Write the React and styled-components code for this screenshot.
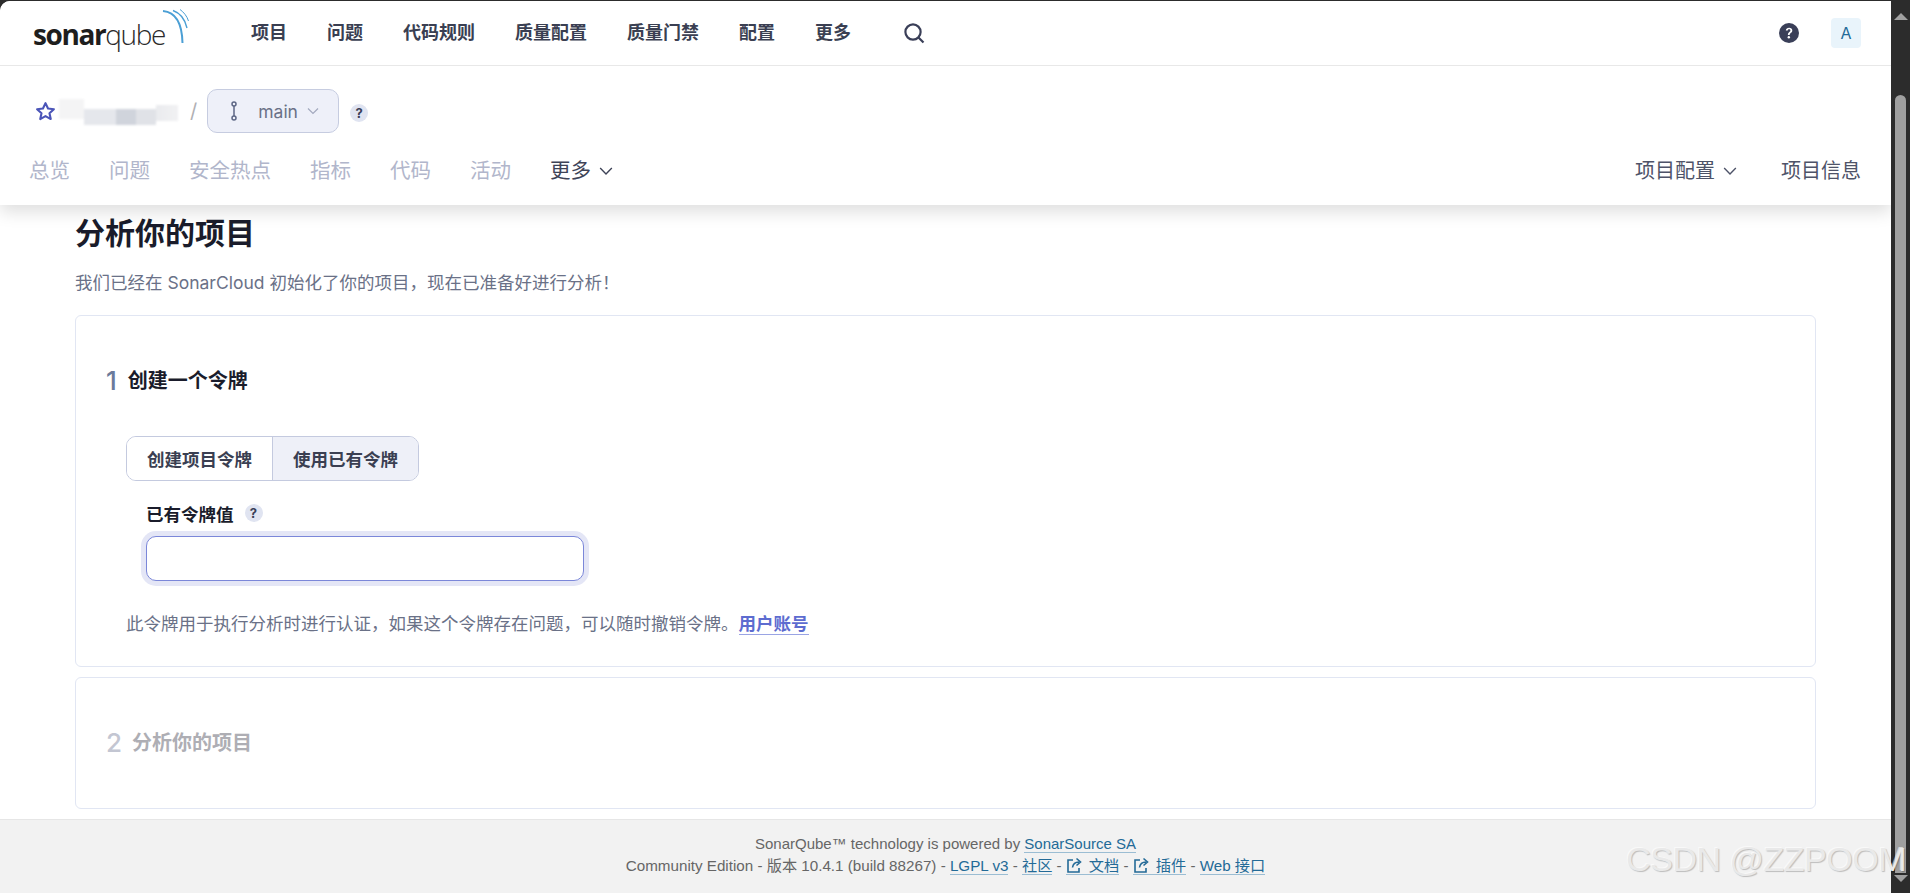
import React from 'react';
import styled, { createGlobalStyle } from 'styled-components';

const FONT = `Inter, "Noto Sans CJK SC", sans-serif`;

const GlobalStyle = createGlobalStyle`
  html, body {
    margin: 0;
    height: 100%;
    overflow: hidden;
    background: #2c2c2c;
  }
  body {
    font-family: ${FONT};
    color: #1a1c2b;
  }
`;

const Window = styled.div`
  position: relative;
  display: flex;
  height: 893px;
  background: #2c2c2c;
`;

const Page = styled.div`
  flex: 1;
  min-width: 0;
  margin-top: 1px;
  display: flex;
  flex-direction: column;
  background: #fff;
  border-top-left-radius: 10px;
  overflow: hidden;
`;

const Scrollbar = styled.div`
  width: 19px;
  padding-top: 13px;
  display: flex;
  flex-direction: column;
  align-items: center;
  border-top-right-radius: 8px;
`;

const ScrollArrow = styled.div`
  width: 0;
  height: 0;
  border-left: 7px solid transparent;
  border-right: 7px solid transparent;
  ${(p) => (p.$down ? 'border-top: 7px solid #a0a0a0; margin-top: 2px;' : 'border-bottom: 7px solid #a0a0a0;')}
`;

const ScrollThumb = styled.div`
  width: 11px;
  height: 778px;
  margin-top: 75px;
  background: #9f9f9f;
  border-radius: 6px 6px 0 0;
`;

const Header = styled.header`
  position: relative;
  z-index: 2;
  background: #fff;
  box-shadow: 0 7px 16px rgba(0, 0, 0, 0.13);
`;

const TopBar = styled.div`
  height: 65px;
  box-sizing: border-box;
  border-bottom: 1px solid #e8e8e8;
  display: flex;
  align-items: center;
  padding: 0 30px 0 33px;
`;

const Logo = styled.div`
  width: 218px;
  flex: none;
  display: flex;
  align-items: flex-start;
  height: 40px;
`;

const LogoText = styled.span`
  font-family: "Open Sans", sans-serif;
  font-size: 28px;
  line-height: 40px;
  letter-spacing: -1.4px;
  margin-top: 1px;
  color: #1e1e1e;
  b {
    font-weight: 700;
  }
  span {
    font-weight: 300;
    color: #2a2a2a;
  }
`;

const LogoArcs = styled.svg`
  flex: none;
  margin: -6px 0 0 -5px;
`;

const MainNav = styled.nav`
  display: flex;
  align-items: center;
  gap: 40px;
`;

const MainNavItem = styled.a`
  font-size: 18px;
  font-weight: 700;
  line-height: 24px;
  color: #3a3f52;
  margin-top: -1px;
`;

const SearchIcon = styled.svg`
  margin-left: 52px;
`;

const TopRight = styled.div`
  margin-left: auto;
  display: flex;
  align-items: center;
  gap: 32px;
`;

const Avatar = styled.div`
  width: 30px;
  height: 30px;
  border-radius: 4px;
  background: #e9f4fb;
  color: #236a97;
  font-size: 16px;
  display: flex;
  align-items: center;
  justify-content: center;
`;

const ProjectBar = styled.div`
  height: 139px;
  box-sizing: border-box;
  padding: 23px 30px 0 29px;
`;

const CrumbRow = styled.div`
  display: flex;
  align-items: center;
  height: 44px;
`;

const BlurredName = styled.div`
  width: 122px;
  height: 28px;
  margin: 4px 0 0 3px;
  filter: blur(1.2px);
  background:
    linear-gradient(90deg, #e5e7ec 0 32px, #d0d4dc 32px 52px, #e0e2e7 52px 72px, transparent 72px) 25px 10px / 72px 16px no-repeat,
    linear-gradient(90deg, #eaebee, #f1f1f3) 97px 6px / 22px 16px no-repeat,
    linear-gradient(#f4f4f5, #f4f4f5) 0 0 / 25px 20px no-repeat;
`;

const Slash = styled.span`
  margin: 0 10px 0 9px;
  font-size: 20px;
  color: #b0b0b4;
`;

const BranchButton = styled.div`
  width: 132px;
  height: 44px;
  box-sizing: border-box;
  border: 1px solid #c6cce0;
  border-radius: 10px;
  background: #eef0f9;
  display: flex;
  align-items: center;
  padding-left: 20px;
  font-size: 17.5px;
  color: #6a7187;
`;

const BranchName = styled.span`
  margin: 0 9px 0 18px;
`;

const HelpBadge = styled.span`
  flex: none;
  width: 18px;
  height: 18px;
  border-radius: 50%;
  background: #e0e4f1;
  color: #3a3f58;
  font-size: 13px;
  font-weight: 700;
  display: inline-flex;
  align-items: center;
  justify-content: center;
  margin: ${(p) => p.$top || 0}px 0 0 ${(p) => p.$gap || 11}px;
`;

const TabRow = styled.div`
  display: flex;
  align-items: center;
  height: 30px;
  margin-top: 23px;
`;

const TabList = styled.div`
  display: flex;
  align-items: center;
  gap: 39px;
`;

const Tab = styled.a`
  font-size: 20.5px;
  line-height: 30px;
  color: ${(p) => (p.$dark ? '#3e4357' : '#b1b6cb')};
  display: inline-flex;
  align-items: center;
  gap: 8px;
`;

const TabRight = styled(TabList)`
  margin-left: auto;
  gap: 44px;
`;

const RightTab = styled(Tab)`
  font-size: 20px;
  color: #4e5368;
`;

const Content = styled.main`
  flex: 1;
  padding: 0 75px;
`;

const Title = styled.h1`
  margin: 8px 0 0;
  font-size: 30px;
  line-height: 40px;
  font-weight: 700;
  color: #1a1c2b;
`;

const Subtitle = styled.p`
  margin: 17px 0 19px;
  font-size: 17.5px;
  line-height: 26px;
  color: #6a7187;
`;

const Card = styled.section`
  border: 1px solid #e1e6f3;
  border-radius: 6px;
  box-sizing: border-box;
  padding: ${(p) => (p.$collapsed ? '0 30px' : '50px 30px 30px')};
  height: ${(p) => (p.$collapsed ? '132px' : 'auto')};
  margin-bottom: 10px;
  display: flex;
  flex-direction: column;
  justify-content: ${(p) => (p.$collapsed ? 'center' : 'flex-start')};
`;

const StepHead = styled.div`
  display: flex;
  align-items: center;
  gap: ${(p) => (p.$muted ? 10 : 11)}px;
  height: 30px;
`;

const StepNumber = styled.span`
  font-size: 26px;
  font-weight: 500;
  line-height: 30px;
  color: ${(p) => (p.$muted ? '#c3c6d2' : '#6b7a9b')};
`;

const StepTitle = styled.h2`
  margin: 0;
  font-size: 20px;
  line-height: 30px;
  font-weight: 700;
  color: ${(p) => (p.$muted ? '#aeaeb4' : '#1a1c2b')};
`;

const StepBody = styled.div`
  margin: 40px 0 0 20px;
`;

const Toggle = styled.div`
  display: inline-flex;
  height: 45px;
  box-sizing: border-box;
  border: 1px solid #c4cadf;
  border-radius: 10px;
  overflow: hidden;
`;

const ToggleOption = styled.button`
  width: ${(p) => (p.$active ? 146 : 145)}px;
  border: 0;
  padding: 0;
  font-family: inherit;
  font-size: 17.5px;
  font-weight: 700;
  color: #3a3f52;
  background: ${(p) => (p.$active ? '#eef0f8' : '#fff')};
  & + & {
    border-left: 1px solid #c4cadf;
  }
`;

const Field = styled.div`
  margin: 19px 0 0 20px;
`;

const Label = styled.label`
  display: flex;
  align-items: center;
  height: 26px;
  font-size: 17.5px;
  font-weight: 700;
  color: #1a1c2b;
`;

const TokenInput = styled.input`
  display: block;
  width: 438px;
  height: 45px;
  box-sizing: border-box;
  margin-top: 10px;
  border: 1px solid #7b87d9;
  border-radius: 10px;
  outline: 0;
  box-shadow: 0 0 0 5px #e4e6f6;
  background: #fff;
`;

const HelpText = styled.p`
  margin: 30px 0 -1px;
  font-size: 17.5px;
  line-height: 26px;
  color: #6a7187;
`;

const StrongLink = styled.a`
  font-weight: 700;
  color: #5d6cd0;
  border-bottom: 1px solid #9aa4e4;
`;

const Footer = styled.footer`
  height: 74px;
  box-sizing: border-box;
  border-top: 1px solid #e6e6e6;
  background: #f2f2f2;
  padding-top: 13px;
  text-align: center;
  font-family: "Liberation Sans", "Noto Sans CJK SC", sans-serif;
  font-size: 15px;
  line-height: 22px;
  color: #666;
`;

const FooterLine = styled.div`
  font-size: ${(p) => p.$size || 15}px;
`;

const FooterLink = styled.a`
  color: #236a97;
  border-bottom: 1px solid #9bbdd3;
  white-space: nowrap;
  svg {
    vertical-align: -3px;
    margin-right: 6px;
  }
`;

const Watermark = styled.div`
  position: absolute;
  right: 4px;
  bottom: 14px;
  font-family: "Liberation Sans", sans-serif;
  font-size: 34px;
  line-height: 40px;
  letter-spacing: -0.5px;
  color: #e9e9e9;
  text-shadow: 1px 1px 1px rgba(0, 0, 0, 0.22), -1px -1px 0 rgba(255, 255, 255, 0.6);
  white-space: nowrap;
  pointer-events: none;
`;

const Chevron = ({ size = 12, color = 'currentColor' }) => (
  <svg width={size} height={size} viewBox="0 0 12 12" fill="none">
    <path d="M1 3.5 6 8.5 11 3.5" stroke={color} strokeWidth="1.2" />
  </svg>
);

const ExternalIcon = () => (
  <svg width="17" height="17" viewBox="0 0 17 17" fill="none" stroke="#236a97" strokeWidth="1.6">
    <path d="M7 3H2v12h11v-4" />
    <path d="M6.5 10.5C7 7 9 5 13 5M10.5 1.5 14.5 5l-4 3.5" />
  </svg>
);

const MAIN_NAV = ['项目', '问题', '代码规则', '质量配置', '质量门禁', '配置', '更多'];
const TABS = ['总览', '问题', '安全热点', '指标', '代码', '活动'];

export default function App() {
  return (
    <Window>
      <GlobalStyle />
      <Page>
        <Header>
          <TopBar>
            <Logo>
              <LogoText>
                <b>sonar</b>
                <span>qube</span>
              </LogoText>
              <LogoArcs width="30" height="40" viewBox="0 0 30 40" fill="none">
                <path d="M3 4C14 5 22 14 22.5 36" stroke="#4b9fd5" strokeWidth="2" />
                <path d="M13 3.5C20 6 25 12 27 21" stroke="#4b9fd5" strokeWidth="1.4" />
                <path d="M20 2.5C23.5 5 27 9 28.5 14" stroke="#4b9fd5" strokeWidth="1" />
              </LogoArcs>
            </Logo>
            <MainNav>
              {MAIN_NAV.map((item) => (
                <MainNavItem key={item}>{item}</MainNavItem>
              ))}
            </MainNav>
            <SearchIcon width="22" height="22" viewBox="0 0 22 22" fill="none" stroke="#3a3f58" strokeWidth="2.2">
              <circle cx="10" cy="10" r="7.6" />
              <path d="M15.5 15.5 20.5 20.5" />
            </SearchIcon>
            <TopRight>
              <svg width="20" height="20" viewBox="0 0 20 20">
                <circle cx="10" cy="10" r="10" fill="#3a3f58" />
                <path d="M6.8 7.6C7 5.6 8.4 4.7 10.1 4.7c1.9 0 3.2 1.1 3.2 2.7 0 2.4-2.6 2.4-2.6 4.6H8.9c0-3 2.5-3.1 2.5-4.6 0-.7-.5-1.1-1.3-1.1-.8 0-1.3.5-1.4 1.3Z" fill="#fff" />
                <circle cx="9.8" cy="14.2" r="1.2" fill="#fff" />
              </svg>
              <Avatar>A</Avatar>
            </TopRight>
          </TopBar>
          <ProjectBar>
            <CrumbRow>
              <svg width="21" height="21" viewBox="0 0 20 20" fill="none" stroke="#4b55b8" strokeWidth="2" style={{ marginLeft: 6 }}>
                <path d="M10 2l2.4 5.2 5.6.6-4.2 3.8 1.2 5.6L10 14.4l-5 2.8 1.2-5.6L2 7.8l5.6-.6Z" strokeLinejoin="round" />
              </svg>
              <BlurredName />
              <Slash>/</Slash>
              <BranchButton>
                <svg width="12" height="20" viewBox="0 0 12 20" fill="none" stroke="#5d6685" strokeWidth="1.5">
                  <circle cx="6" cy="3" r="2" />
                  <circle cx="6" cy="17" r="2" />
                  <path d="M6 5v10" />
                </svg>
                <BranchName>main</BranchName>
                <Chevron color="#a3a9bf" />
              </BranchButton>
              <HelpBadge $top={3}>?</HelpBadge>
            </CrumbRow>
            <TabRow>
              <TabList>
                {TABS.map((tab) => (
                  <Tab key={tab}>{tab}</Tab>
                ))}
                <Tab $dark>
                  更多
                  <Chevron size={14} />
                </Tab>
              </TabList>
              <TabRight>
                <RightTab>
                  项目配置
                  <Chevron size={14} />
                </RightTab>
                <RightTab>项目信息</RightTab>
              </TabRight>
            </TabRow>
          </ProjectBar>
        </Header>
        <Content>
          <Title>分析你的项目</Title>
          <Subtitle>我们已经在 SonarCloud 初始化了你的项目，现在已准备好进行分析！</Subtitle>
          <Card>
            <StepHead>
              <StepNumber>1</StepNumber>
              <StepTitle>创建一个令牌</StepTitle>
            </StepHead>
            <StepBody>
              <Toggle>
                <ToggleOption>创建项目令牌</ToggleOption>
                <ToggleOption $active>使用已有令牌</ToggleOption>
              </Toggle>
              <Field>
                <Label>
                  已有令牌值
                  <HelpBadge $gap={11}>?</HelpBadge>
                </Label>
                <TokenInput />
              </Field>
              <HelpText>
                此令牌用于执行分析时进行认证，如果这个令牌存在问题，可以随时撤销令牌。
                <StrongLink>用户账号</StrongLink>
              </HelpText>
            </StepBody>
          </Card>
          <Card $collapsed>
            <StepHead $muted>
              <StepNumber $muted>2</StepNumber>
              <StepTitle $muted>分析你的项目</StepTitle>
            </StepHead>
          </Card>
        </Content>
        <Footer>
          <FooterLine>
            SonarQube™ technology is powered by <FooterLink>SonarSource SA</FooterLink>
          </FooterLine>
          <FooterLine $size={15.2}>
            Community Edition - 版本 10.4.1 (build 88267) - <FooterLink>LGPL v3</FooterLink> - <FooterLink>社区</FooterLink> -{' '}
            <FooterLink>
              <ExternalIcon />
              文档
            </FooterLink>{' '}
            -{' '}
            <FooterLink>
              <ExternalIcon />
              插件
            </FooterLink>{' '}
            - <FooterLink>Web 接口</FooterLink>
          </FooterLine>
        </Footer>
      </Page>
      <Scrollbar>
        <ScrollArrow />
        <ScrollThumb />
        <ScrollArrow $down />
      </Scrollbar>
      <Watermark>CSDN @ZZPOOM</Watermark>
    </Window>
  );
}
